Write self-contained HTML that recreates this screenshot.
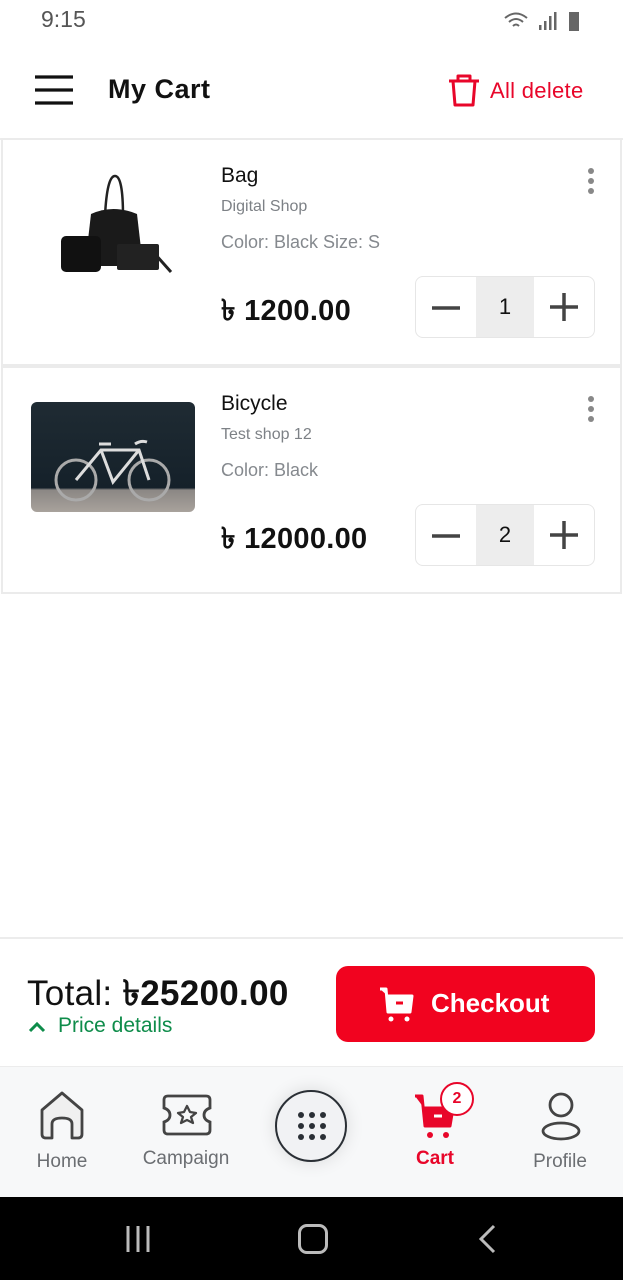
<!DOCTYPE html>
<html><head><meta charset="utf-8"><style>
*{margin:0;padding:0;box-sizing:border-box}
body{width:623px;height:1280px;background:#fff;font-family:"Liberation Sans","DejaVu Sans",sans-serif;position:relative;overflow:hidden;color:#111}
.abs{position:absolute}
.card{position:absolute;left:1px;width:621px;height:228px;border:2px solid #ebebeb;background:#fff}
.name{position:absolute;left:218px;font-size:21px;color:#111}
.shop{position:absolute;left:218px;font-size:16px;color:#7d8186}
.attr{position:absolute;left:218px;font-size:18px;color:#85898e}
.price{position:absolute;left:218px;font-size:29px;font-weight:bold;color:#111;letter-spacing:0.3px}
.qty{position:absolute;left:412px;width:180px;height:62px;border:1.5px solid #e6e6e6;border-radius:8px;overflow:hidden}
.qty .mid{position:absolute;left:60px;width:58px;top:0;bottom:0;background:#ededed;text-align:center;line-height:60px;font-size:22px}
.dots{position:absolute;left:585px;width:6px}
.dots i{display:block;width:6px;height:6px;border-radius:3px;background:#888;margin-bottom:4px}
.nav{font-size:19px;color:#6b6e72;position:absolute;text-align:center;width:120px}
</style></head><body>
<div class="abs" style="left:41px;top:6px;font-size:23px;color:#555">9:15</div>
<svg class="abs" style="left:503px;top:9px" width="84" height="24" viewBox="0 0 84 24">
<path d="M2 9 Q13 0 24 9 M6 13 Q13 7 20 13 M10 17 Q13 14 16 17" stroke="#666" stroke-width="2" fill="none"/>
<rect x="36" y="16" width="2.5" height="5" fill="#666"/><rect x="41" y="12" width="2.5" height="9" fill="#666"/><rect x="46" y="7" width="2.5" height="14" fill="#666"/><rect x="51" y="3" width="2.5" height="18" fill="#666"/>
<rect x="66" y="3" width="10" height="19" fill="#666"/></svg>
<svg class="abs" style="left:34px;top:74px" width="40" height="32"><path d="M1 3H39M1 16H39M1 29H39" stroke="#111" stroke-width="3.2"/></svg>
<div class="abs" style="left:108px;top:74px;font-size:27px;font-weight:bold;color:#111;letter-spacing:0.5px">My Cart</div>
<svg class="abs" style="left:446px;top:72px" width="36" height="36" viewBox="0 0 36 36"><path d="M3 9H33M12 9V4H24V9M7 9L9 33H27L29 9" stroke="#e8062a" stroke-width="3" fill="none" stroke-linejoin="round"/></svg>
<div class="abs" style="left:490px;top:78px;font-size:22px;color:#e8062a;letter-spacing:0.3px">All delete</div>
<div class="abs" style="left:0;top:138px;width:623px;height:2px;background:#ececec"></div>

<div class="card" style="top:138px">
<svg class="abs" style="left:52px;top:34px" width="120" height="100" viewBox="0 0 120 100"><path d="M50 42 Q52 2 60 2 Q68 2 68 42" stroke="#222" stroke-width="2.5" fill="none"/><path d="M36 40 Q58 30 82 40 L88 92 H30Z" fill="#1a1a1a"/><rect x="6" y="62" width="40" height="36" rx="5" fill="#111"/><rect x="62" y="70" width="42" height="26" rx="2" fill="#222"/><path d="M100 80 L116 98" stroke="#222" stroke-width="3"/></svg>
<div class="name" style="top:24px">Bag</div>
<div class="shop" style="top:58px">Digital Shop</div>
<div class="attr" style="top:92px">Color: Black Size: S</div>
<div class="price" style="top:148px">৳ 1200.00</div>
<div class="qty" style="top:136px"><svg class="abs" style="left:14px;top:16px" width="32" height="30"><path d="M2 15H30" stroke="#444" stroke-width="3.5"/></svg><div class="mid">1</div><svg class="abs" style="left:132px;top:14px" width="32" height="32"><path d="M2 16H30M16 2V30" stroke="#444" stroke-width="3.5"/></svg></div>
<div class="dots" style="top:28px"><i></i><i></i><i></i></div>
</div>

<div class="card" style="top:366px">
<div class="abs" style="left:28px;top:34px;width:164px;height:110px;border-radius:6px;background:linear-gradient(#1f2b33 0%,#15212a 78%,#8b8784 80%,#a8a29c 100%)">
<svg width="164" height="110" viewBox="0 0 164 110"><circle cx="45" cy="78" r="20" stroke="#aaa" stroke-width="3" fill="none"/><circle cx="118" cy="78" r="20" stroke="#aaa" stroke-width="3" fill="none"/><path d="M45 78 L70 48 H108 L118 78 M70 48 L82 80 L108 48 M68 42 H80 M104 42 Q110 38 116 40" stroke="#ddd" stroke-width="3" fill="none"/></svg></div>
<div class="name" style="top:24px">Bicycle</div>
<div class="shop" style="top:58px">Test shop 12</div>
<div class="attr" style="top:92px">Color: Black</div>
<div class="price" style="top:148px">৳ 12000.00</div>
<div class="qty" style="top:136px"><svg class="abs" style="left:14px;top:16px" width="32" height="30"><path d="M2 15H30" stroke="#444" stroke-width="3.5"/></svg><div class="mid">2</div><svg class="abs" style="left:132px;top:14px" width="32" height="32"><path d="M2 16H30M16 2V30" stroke="#444" stroke-width="3.5"/></svg></div>
<div class="dots" style="top:28px"><i></i><i></i><i></i></div>
</div>

<div class="abs" style="left:0;top:937px;width:623px;height:2px;background:#ececec"></div>
<div class="abs" style="left:27px;top:966px;font-size:35px;color:#111;letter-spacing:0.3px">Total: <b style="font-weight:bold">৳25200.00</b></div>
<svg class="abs" style="left:28px;top:1020px" width="18" height="14"><path d="M2 11L9 4L16 11" stroke="#0e8c4a" stroke-width="3" fill="none"/></svg>
<div class="abs" style="left:58px;top:1014px;font-size:21px;color:#0e8c4a">Price details</div>
<div class="abs" style="left:336px;top:966px;width:259px;height:76px;background:#f1031f;border-radius:12px"></div>
<svg class="abs" style="left:378px;top:986px" width="38" height="36" viewBox="0 0 38 36"><path d="M2 3H8L10 26H32L34 10H10" fill="#fff" stroke="#fff" stroke-width="3" stroke-linejoin="round"/><path d="M18 17H25" stroke="#f1031f" stroke-width="3"/><circle cx="13" cy="33" r="2.5" fill="#fff"/><circle cx="29" cy="33" r="2.5" fill="#fff"/></svg>
<div class="abs" style="left:431px;top:988px;font-size:26px;font-weight:bold;color:#fff">Checkout</div>

<div class="abs" style="left:0;top:1066px;width:623px;height:131px;background:#f7f8f9;border-top:1px solid #ececec"></div>
<svg class="abs" style="left:38px;top:1090px" width="48" height="50" viewBox="0 0 48 50"><path d="M4 20 L24 3 L44 20 V44 Q44 48 40 48 H34 V34 Q34 28 24 28 Q14 28 14 34 V48 H8 Q4 48 4 44Z" fill="#f0f0f0" stroke="#444" stroke-width="2.8" stroke-linejoin="round"/></svg>
<div class="nav" style="left:2px;top:1151px">Home</div>
<svg class="abs" style="left:162px;top:1094px" width="50" height="42" viewBox="0 0 50 42"><path d="M6 2H44Q48 2 48 6V14Q42 16 42 21Q42 26 48 28V36Q48 40 44 40H6Q2 40 2 36V28Q8 26 8 21Q8 16 2 14V6Q2 2 6 2Z" fill="none" stroke="#444" stroke-width="2.8"/><path d="M25 12L28 18L34 19L29 23L31 29L25 26L19 29L21 23L16 19L22 18Z" fill="none" stroke="#444" stroke-width="2.3" stroke-linejoin="round"/></svg>
<div class="nav" style="left:126px;top:1148px">Campaign</div>
<div class="abs" style="left:275px;top:1090px;width:72px;height:72px;border-radius:50%;border:2.5px solid #2a2f35;background:#f1f2f4;box-shadow:0 0 18px rgba(0,0,0,.12)"></div>
<svg class="abs" style="left:297px;top:1111px" width="30" height="30"><g fill="#2a2f35"><circle cx="4" cy="4" r="3"/><circle cx="15" cy="4" r="3"/><circle cx="26" cy="4" r="3"/><circle cx="4" cy="15" r="3"/><circle cx="15" cy="15" r="3"/><circle cx="26" cy="15" r="3"/><circle cx="4" cy="26" r="3"/><circle cx="15" cy="26" r="3"/><circle cx="26" cy="26" r="3"/></g></svg>
<svg class="abs" style="left:412px;top:1092px" width="46" height="48" viewBox="0 0 46 48"><path d="M3 4H10L13 34H38L41 16H12" fill="#e8062a" stroke="#e8062a" stroke-width="3" stroke-linejoin="round"/><path d="M22 24H30" stroke="#fff" stroke-width="3"/><circle cx="18" cy="43" r="3" fill="#e8062a"/><circle cx="34" cy="43" r="3" fill="#e8062a"/></svg>
<div class="abs" style="left:440px;top:1082px;width:34px;height:34px;border-radius:50%;background:#fff;border:2.5px solid #e8062a;color:#e8062a;font-weight:bold;font-size:16px;text-align:center;line-height:29px">2</div>
<div class="nav" style="left:375px;top:1148px;color:#e8062a;font-weight:bold">Cart</div>
<svg class="abs" style="left:540px;top:1092px" width="42" height="50" viewBox="0 0 42 50"><circle cx="21" cy="13" r="11" fill="none" stroke="#444" stroke-width="2.8"/><ellipse cx="21" cy="39" rx="18" ry="8" fill="none" stroke="#444" stroke-width="2.8"/></svg>
<div class="nav" style="left:500px;top:1151px">Profile</div>

<div class="abs" style="left:0;top:1197px;width:623px;height:83px;background:#000"></div>
<svg class="abs" style="left:124px;top:1224px" width="30" height="30"><path d="M4 2V28M14 2V28M24 2V28" stroke="#bbb" stroke-width="3"/></svg>
<div class="abs" style="left:298px;top:1224px;width:30px;height:30px;border:3px solid #bbb;border-radius:9px"></div>
<svg class="abs" style="left:476px;top:1224px" width="22" height="30"><path d="M18 2L5 15L18 28" stroke="#bbb" stroke-width="3" fill="none"/></svg>
</body></html>
